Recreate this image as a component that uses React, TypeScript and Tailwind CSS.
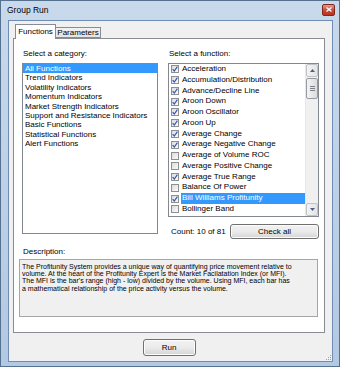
import React from "react";

const categories = [
  "All Functions",
  "Trend Indicators",
  "Volatility Indicators",
  "Momentum Indicators",
  "Market Strength Indicators",
  "Support and Resistance Indicators",
  "Basic Functions",
  "Statistical Functions",
  "Alert Functions",
];

const functions: { name: string; checked: boolean }[] = [
  { name: "Acceleration", checked: true },
  { name: "Accumulation/Distribution", checked: true },
  { name: "Advance/Decline Line", checked: true },
  { name: "Aroon Down", checked: true },
  { name: "Aroon Oscillator", checked: true },
  { name: "Aroon Up", checked: true },
  { name: "Average Change", checked: true },
  { name: "Average Negative Change", checked: true },
  { name: "Average of Volume ROC", checked: false },
  { name: "Average Positive Change", checked: false },
  { name: "Average True Range", checked: true },
  { name: "Balance Of Power", checked: false },
  { name: "Bill Williams Profitunity", checked: true },
  { name: "Bollinger Band", checked: false },
];

const descLines = [
  "The Profitunity System provides a unique way of quantifying price movement relative to",
  "volume. At the heart of the Profitunity Expert is the Market Facilatation Index (or MFI).",
  "The MFI is the bar's range (high - low) divided by the volume. Using MFI, each bar has",
  "a mathematical relationship of the price activity versus the volume.",
];

const CheckBox = ({ checked }: { checked: boolean }) => (
  <span className="w-[8px] h-[8px] shrink-0 border border-[#8e8f8f] bg-gradient-to-br from-[#dcdcdc] to-[#fbfbfb] flex items-center justify-center">
    {checked && (
      <svg width="6" height="6" viewBox="0 0 6 6">
        <path d="M0.6 3.2 L2.3 5 L5.4 0.6" fill="none" stroke="#3a56b6" strokeWidth="1.2" />
      </svg>
    )}
  </span>
);

const Arrow = ({ up }: { up: boolean }) => (
  <svg width="5" height="3" viewBox="0 0 5 3">
    <path d={up ? "M0 3 L2.5 0 L5 3 Z" : "M0 0 L2.5 3 L5 0 Z"} fill="#4d6185" />
  </svg>
);

const WinButton = ({ label, className }: { label: string; className: string }) => (
  <div
    className={`${className} rounded-[3px] border border-[#707070] bg-gradient-to-b from-[#f2f2f2] via-[#ebebeb] to-[#d4d4d4] flex items-center justify-center text-[8px] leading-none shadow-[inset_0_0_0_1px_#fcfcfc]`}
  >
    {label}
  </div>
);

export default function App() {
  return (
    <div className="w-[340px] h-[367px] flex flex-col bg-gradient-to-b from-[#c9d9ec] to-[#b3c8e2] border border-[#56708f] font-['Liberation_Sans',Arial,sans-serif] text-black select-none">
      {/* title bar */}
      <div className="h-[19px] flex items-center justify-between pl-[6px] pr-[4px]">
        <span className="text-[8.5px] leading-none">Group Run</span>
        <div className="w-[13px] h-[12px] mt-[-2px] rounded-[2px] border border-[#7d2a20] bg-gradient-to-b from-[#e49b8f] via-[#c9493a] to-[#b9331f] flex items-center justify-center">
          <svg width="6" height="5" viewBox="0 0 6 5">
            <path d="M0.5 0.5 L5.5 4.5 M5.5 0.5 L0.5 4.5" stroke="#ffffff" strokeWidth="1.3" />
          </svg>
        </div>
      </div>

      {/* client area */}
      <div className="relative ml-[7px] mr-[6px] mb-[4px] flex-1 bg-[#f0f0f0] border border-[#6f8db4] flex flex-col pl-[4px] pr-[7px] pt-[2px]">
        {/* tabs */}
        <div className="flex items-end h-[15px] ml-[2px]">
          <div className="relative z-10 w-[41px] h-[15px] -mb-px bg-white border border-[#898c95] border-b-0 flex items-center justify-center text-[8px] leading-none">
            Functions
          </div>
          <div className="w-[45px] h-[11px] bg-gradient-to-b from-[#f2f2f2] to-[#e3e3e3] border border-[#898c95] border-l-0 flex items-center justify-center text-[8px] leading-none">
            Parameters
          </div>
        </div>

        {/* tab panel */}
        <div className="h-[295px] bg-white border border-[#898c95] flex flex-col pt-[10px] text-[8px]">
          <div className="flex gap-[10px] pl-[8px]">
            {/* categories */}
            <div className="w-[136px] flex flex-col">
              <div className="h-[10px] leading-[10px] pl-[1px]">Select a category:</div>
              <div className="mt-[4px] h-[171px] border border-[#828790] bg-white flex flex-col">
                {categories.map((c, i) => (
                  <div
                    key={c}
                    className={`h-[9.375px] leading-[9.375px] pl-[2px] whitespace-nowrap ${
                      i === 0 ? "bg-[#3399ff] text-white" : ""
                    }`}
                  >
                    {c}
                  </div>
                ))}
              </div>
            </div>

            {/* functions */}
            <div className="w-[151px] flex flex-col">
              <div className="h-[10px] leading-[10px] pl-[1px]">Select a function:</div>
              <div className="mt-[4px] h-[154px] border border-[#828790] bg-white flex">
                <div className="flex-1 flex flex-col">
                  {functions.map((f, i) => (
                    <div key={f.name} className="h-[10.77px] flex items-center pl-[2px] gap-[2px]">
                      <CheckBox checked={f.checked} />
                      <span
                        className={`h-full leading-[10.77px] pl-[1px] pr-[2px] flex-1 whitespace-nowrap ${
                          i === 12 ? "bg-[#3399ff] text-white" : ""
                        }`}
                      >
                        {f.name}
                      </span>
                    </div>
                  ))}
                </div>
                {/* scrollbar */}
                <div className="w-[13px] bg-[#f0f0f0] border-l border-[#e8e8e8] flex flex-col">
                  <div className="h-[13px] rounded-[2px] border border-[#c2c3c9] bg-gradient-to-r from-[#f3f3f3] to-[#e4e4e4] flex items-center justify-center">
                    <Arrow up />
                  </div>
                  <div className="mt-[1px] h-[21px] rounded-[2px] border border-[#979aa2] bg-gradient-to-r from-[#f4f4f4] to-[#dcdcdc] flex flex-col items-center justify-center gap-[1px]">
                    <span className="w-[5px] h-px bg-[#7c7f87]" />
                    <span className="w-[5px] h-px bg-[#7c7f87]" />
                    <span className="w-[5px] h-px bg-[#7c7f87]" />
                  </div>
                  <div className="flex-1" />
                  <div className="h-[13px] rounded-[2px] border border-[#c2c3c9] bg-gradient-to-r from-[#f3f3f3] to-[#e4e4e4] flex items-center justify-center">
                    <Arrow up={false} />
                  </div>
                </div>
              </div>
              <div className="mt-[7px] flex items-center justify-between">
                <span className="pl-[3px]">Count: 10 of 81</span>
                <WinButton label="Check all" className="w-[89px] h-[15px]" />
              </div>
            </div>
          </div>

          {/* description */}
          <div className="mt-[8px] pl-[9px] h-[10px] leading-[10px]">Description:</div>
          <div className="mt-[2px] ml-[5px] w-[299px] h-[58px] border border-[#a5a5a5] bg-[#f0f0f0] pl-[2px] pt-[3px] text-[7px] leading-[7.2px]">
            {descLines.map((l) => (
              <div key={l} className="whitespace-nowrap">
                {l}
              </div>
            ))}
          </div>
        </div>

        {/* bottom button */}
        <div className="mt-[6px] flex justify-center">
          <WinButton label="Run" className="w-[53px] h-[17px]" />
        </div>

        {/* size grip */}
        <div className="absolute right-[1px] bottom-[1px] grid grid-cols-3 gap-[1px]">
          {[0, 0, 1, 0, 1, 1, 1, 1, 1].map((v, i) => (
            <span key={i} className={`w-[1px] h-[1px] ${v ? "bg-[#a0a0a0]" : ""}`} />
          ))}
        </div>
      </div>
    </div>
  );
}
